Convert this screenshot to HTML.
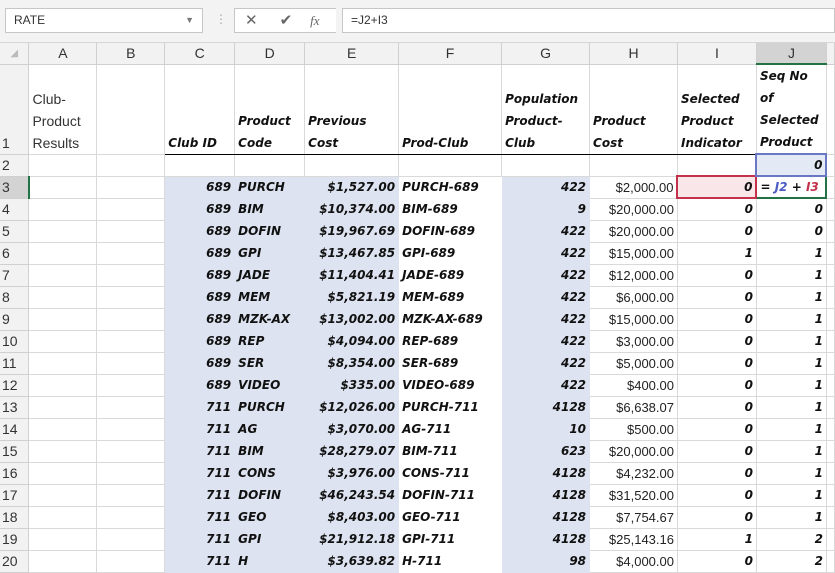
<!DOCTYPE html>
<html><head><meta charset="utf-8"><style>
*{box-sizing:border-box;margin:0;padding:0}
body{width:835px;height:571px;overflow:hidden;background:#fff;font-family:"DejaVu Sans",sans-serif;position:relative}
#bar{position:absolute;left:0;top:0;width:835px;height:43px;background:#f3f3f3;border-bottom:1px solid #d6d6d6}
.box{position:absolute;top:8px;height:25px;background:#fff;border:1px solid #c6c6c6;font:12px "Liberation Sans",sans-serif;line-height:23px;color:#333;padding-left:8px}
table{position:absolute;left:0;top:43px;border-collapse:collapse;table-layout:fixed}
td{border-right:1px solid #d9d9d9;border-bottom:1px solid #d9d9d9;height:22px;padding:0 3px;font-size:12px;font-weight:bold;font-style:italic;white-space:nowrap;overflow:hidden;color:#111;line-height:20px}
tr.h td{height:21px;background:#f2f2f2;border-color:#d0d0d0;text-align:center;font:14px "Liberation Sans",sans-serif;color:#333}
td.rh{background:#f2f2f2;border-color:#d0d0d0;font:14px "Liberation Sans",sans-serif;color:#333;padding-left:2px}
.r{text-align:right}
.f{background:#dde3f0;border-color:#dde3f0}
.w{border-color:#fff}
.n{font:13px "Liberation Sans",sans-serif;font-style:normal;text-align:right;color:#222;padding-right:3px}
.hd{vertical-align:bottom;white-space:normal;padding-bottom:0}
.hd div{line-height:22px;height:22px}
.ul{border-bottom:1.5px solid #000}
.pl{font:14px "Liberation Sans",sans-serif;font-style:normal;font-weight:normal;color:#333}
</style></head><body>
<div id="bar">
<div class="box" style="left:5px;width:198px">RATE<span style="position:absolute;right:8px;top:0;font-size:9px;color:#777">▼</span></div>
<div style="position:absolute;left:215px;top:12px;color:#aaa;font-size:12px">⋮</div>
<div class="box" style="left:234px;width:102px;border-right:none;color:#666;font-size:15px;padding-left:10px">✕<span style="margin-left:22px">✔</span><span style="margin-left:18px;font-family:'Liberation Serif',serif;font-style:italic;font-size:13px">fx</span></div>
<div class="box" style="left:342px;width:493px">=J2+I3</div>
</div>
<table>
<colgroup><col style="width:29px"><col style="width:68px"><col style="width:68px"><col style="width:70px"><col style="width:70px"><col style="width:94px"><col style="width:103px"><col style="width:88px"><col style="width:88px"><col style="width:79px"><col style="width:70px"><col style="width:8px"></colgroup>
<tr class="h"><td style="font-size:10px;color:#bbb">◢</td><td>A</td><td>B</td><td>C</td><td>D</td><td>E</td><td>F</td><td>G</td><td>H</td><td>I</td><td style="background:#d3d3d3;border-bottom:2px solid #217346">J</td><td></td></tr>
<tr style="height:88px"><td class="rh hd" style="height:88px"><div>1</div></td><td class="hd pl"><div>Club-</div><div>Product</div><div>Results</div></td><td></td><td class="hd ul"><div>Club ID</div></td><td class="hd ul"><div>Product</div><div>Code</div></td><td class="hd ul"><div>Previous</div><div>Cost</div></td><td class="hd ul"><div>Prod-Club</div></td><td class="hd ul"><div>Population</div><div>Product-</div><div>Club</div></td><td class="hd ul"><div>Product</div><div>Cost</div></td><td class="hd ul"><div>Selected</div><div>Product</div><div>Indicator</div></td><td class="hd"><div>Seq No</div><div>of</div><div>Selected</div><div>Product</div></td><td></td></tr>
<tr><td class="rh">2</td><td></td><td></td><td></td><td></td><td></td><td></td><td></td><td></td><td></td><td class="r" style="border:2px solid #6a78c4;background:#e4e9f6">0</td><td></td></tr>
<tr><td class="rh" style="background:#d3d3d3;border-right:2px solid #217346">3</td><td></td><td></td><td class="f r">689</td><td class="f">PURCH</td><td class="f r">$1,527.00</td><td class="w">PURCH-689</td><td class="f r">422</td><td class="n">$2,000.00</td><td class="r" style="border:2px solid #c4314b;background:#f8e6e9">0</td><td style="border:2px solid #217346">= <span style="color:#4b5bc4">J2</span> + <span style="color:#c4314b">I3</span></td><td></td></tr>
<tr><td class="rh">4</td><td></td><td></td><td class="f r">689</td><td class="f">BIM</td><td class="f r">$10,374.00</td><td class="w">BIM-689</td><td class="f r">9</td><td class="n">$20,000.00</td><td class="r">0</td><td class="r">0</td><td></td></tr>
<tr><td class="rh">5</td><td></td><td></td><td class="f r">689</td><td class="f">DOFIN</td><td class="f r">$19,967.69</td><td class="w">DOFIN-689</td><td class="f r">422</td><td class="n">$20,000.00</td><td class="r">0</td><td class="r">0</td><td></td></tr>
<tr><td class="rh">6</td><td></td><td></td><td class="f r">689</td><td class="f">GPI</td><td class="f r">$13,467.85</td><td class="w">GPI-689</td><td class="f r">422</td><td class="n">$15,000.00</td><td class="r">1</td><td class="r">1</td><td></td></tr>
<tr><td class="rh">7</td><td></td><td></td><td class="f r">689</td><td class="f">JADE</td><td class="f r">$11,404.41</td><td class="w">JADE-689</td><td class="f r">422</td><td class="n">$12,000.00</td><td class="r">0</td><td class="r">1</td><td></td></tr>
<tr><td class="rh">8</td><td></td><td></td><td class="f r">689</td><td class="f">MEM</td><td class="f r">$5,821.19</td><td class="w">MEM-689</td><td class="f r">422</td><td class="n">$6,000.00</td><td class="r">0</td><td class="r">1</td><td></td></tr>
<tr><td class="rh">9</td><td></td><td></td><td class="f r">689</td><td class="f">MZK-AX</td><td class="f r">$13,002.00</td><td class="w">MZK-AX-689</td><td class="f r">422</td><td class="n">$15,000.00</td><td class="r">0</td><td class="r">1</td><td></td></tr>
<tr><td class="rh">10</td><td></td><td></td><td class="f r">689</td><td class="f">REP</td><td class="f r">$4,094.00</td><td class="w">REP-689</td><td class="f r">422</td><td class="n">$3,000.00</td><td class="r">0</td><td class="r">1</td><td></td></tr>
<tr><td class="rh">11</td><td></td><td></td><td class="f r">689</td><td class="f">SER</td><td class="f r">$8,354.00</td><td class="w">SER-689</td><td class="f r">422</td><td class="n">$5,000.00</td><td class="r">0</td><td class="r">1</td><td></td></tr>
<tr><td class="rh">12</td><td></td><td></td><td class="f r">689</td><td class="f">VIDEO</td><td class="f r">$335.00</td><td class="w">VIDEO-689</td><td class="f r">422</td><td class="n">$400.00</td><td class="r">0</td><td class="r">1</td><td></td></tr>
<tr><td class="rh">13</td><td></td><td></td><td class="f r">711</td><td class="f">PURCH</td><td class="f r">$12,026.00</td><td class="w">PURCH-711</td><td class="f r">4128</td><td class="n">$6,638.07</td><td class="r">0</td><td class="r">1</td><td></td></tr>
<tr><td class="rh">14</td><td></td><td></td><td class="f r">711</td><td class="f">AG</td><td class="f r">$3,070.00</td><td class="w">AG-711</td><td class="f r">10</td><td class="n">$500.00</td><td class="r">0</td><td class="r">1</td><td></td></tr>
<tr><td class="rh">15</td><td></td><td></td><td class="f r">711</td><td class="f">BIM</td><td class="f r">$28,279.07</td><td class="w">BIM-711</td><td class="f r">623</td><td class="n">$20,000.00</td><td class="r">0</td><td class="r">1</td><td></td></tr>
<tr><td class="rh">16</td><td></td><td></td><td class="f r">711</td><td class="f">CONS</td><td class="f r">$3,976.00</td><td class="w">CONS-711</td><td class="f r">4128</td><td class="n">$4,232.00</td><td class="r">0</td><td class="r">1</td><td></td></tr>
<tr><td class="rh">17</td><td></td><td></td><td class="f r">711</td><td class="f">DOFIN</td><td class="f r">$46,243.54</td><td class="w">DOFIN-711</td><td class="f r">4128</td><td class="n">$31,520.00</td><td class="r">0</td><td class="r">1</td><td></td></tr>
<tr><td class="rh">18</td><td></td><td></td><td class="f r">711</td><td class="f">GEO</td><td class="f r">$8,403.00</td><td class="w">GEO-711</td><td class="f r">4128</td><td class="n">$7,754.67</td><td class="r">0</td><td class="r">1</td><td></td></tr>
<tr><td class="rh">19</td><td></td><td></td><td class="f r">711</td><td class="f">GPI</td><td class="f r">$21,912.18</td><td class="w">GPI-711</td><td class="f r">4128</td><td class="n">$25,143.16</td><td class="r">1</td><td class="r">2</td><td></td></tr>
<tr><td class="rh">20</td><td></td><td></td><td class="f r">711</td><td class="f">H</td><td class="f r">$3,639.82</td><td class="w">H-711</td><td class="f r">98</td><td class="n">$4,000.00</td><td class="r">0</td><td class="r">2</td><td></td></tr>
</table>
</body></html>
